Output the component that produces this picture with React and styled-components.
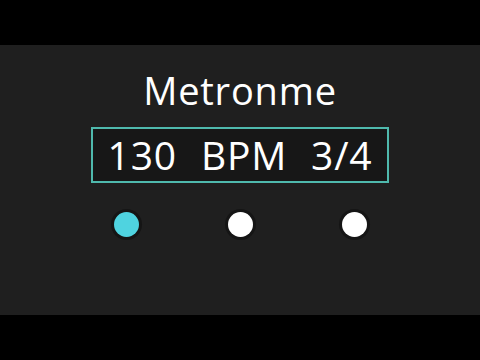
import React from "react";
import styled, { createGlobalStyle } from "styled-components";

const GlobalStyle = createGlobalStyle`
  html, body {
    margin: 0;
    padding: 0;
    background: #000;
  }
  #root {
    width: 480px;
    height: 360px;
  }
`;

const beats = [true, false, false];

const App = () => {
  return (
    <>
      <GlobalStyle />
      <Screen>
        <Letterbox />
        <Stage>
          <Title>Metronme</Title>
          <Display>
            <Value>130</Value>
            <Value>BPM</Value>
            <Value>3/4</Value>
          </Display>
          <Beats>
            {beats.map((on, i) => (
              <Dot key={i} active={on} />
            ))}
          </Beats>
        </Stage>
        <Letterbox />
      </Screen>
    </>
  );
};

export default App;

const Screen = styled.div`
  width: 480px;
  height: 360px;
  display: flex;
  flex-direction: column;
  font-family: "Open Sans", "Noto Sans", sans-serif;
  color: #fff;
`;

const Letterbox = styled.div`
  height: 45px;
  background: #000;
`;

const Stage = styled.div`
  height: 270px;
  background: #1f1f1f;
  display: flex;
  flex-direction: column;
  align-items: center;
`;

const Title = styled.h1`
  margin: 20px 0 0;
  font-size: 38px;
  font-weight: 500;
  letter-spacing: 0.8px;
  line-height: 50px;
`;

const Display = styled.div`
  margin-top: 12px;
  width: 294px;
  height: 52px;
  border: 2px solid #4fb9ad;
  background: #171717;
  display: flex;
  justify-content: center;
  align-items: center;
  gap: 24px;
  box-sizing: content-box;
`;

const Value = styled.span`
  font-size: 39px;
  font-weight: 500;
  letter-spacing: 0.8px;
  line-height: 52px;
`;

const Beats = styled.div`
  margin-top: 29px;
  display: flex;
  gap: 89px;
`;

const Dot = styled.div`
  width: 25px;
  height: 25px;
  border-radius: 50%;
  background: ${({ active }) => (active ? "#4fd3e0" : "#ffffff")};
  box-shadow: 0 0 0 3px #151515;
`;
